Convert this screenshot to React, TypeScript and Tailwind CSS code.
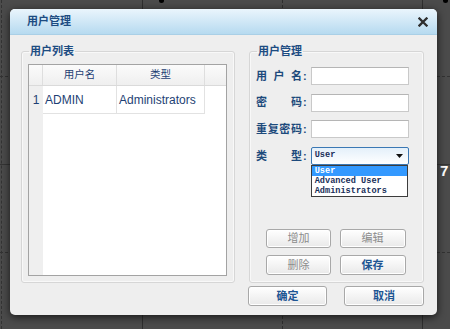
import React from 'react';

const sans = "font-['Liberation_Sans','Noto_Sans_CJK_SC',sans-serif]";
const mono = "font-['Liberation_Mono','Noto_Sans_CJK_SC',monospace]";

const Label: React.FC<{ chars: string[] }> = ({ chars }) => (
  <div className="flex items-center text-[11px] font-bold text-[#1d4a7c]">
    <div className="flex w-[46px] justify-between">
      {chars.map((c, i) => (
        <span key={i}>{c}</span>
      ))}
    </div>
    <span className="ml-[1px]">:</span>
  </div>
);

const Input: React.FC = () => (
  <div className="h-[18px] w-[98px] border border-[#c9c9c9] border-t-[#b5b5b5] bg-white" />
);

const Button: React.FC<{ label: string; active?: boolean; w?: string; h?: string }> = ({
  label,
  active,
  w = 'w-[65px]',
  h = 'h-[19px]',
}) => (
  <button
    className={`${w} ${h} flex items-center justify-center rounded-[3px] border border-[#a8a8a8] bg-gradient-to-b from-white to-[#e9e9e9] text-[11px] shadow-[inset_0_0_0_1px_#ffffff] ${
      active ? 'font-bold text-[#1d5593]' : 'text-[#8c8c8c]'
    }`}
  >
    {label}
  </button>
);

export default function App() {
  return (
    <div className={`relative h-[329px] w-[450px] overflow-hidden bg-[#4b4b4b] ${sans}`}>
      {/* desktop grid behind the window */}
      <div className="absolute left-[1px] top-0 h-full border-l border-dashed border-[#333]" />
      <div className="absolute left-[142px] top-0 h-full border-l border-[#2f2f2f]" />
      <div className="absolute left-[282px] top-0 h-full border-l border-dashed border-[#2f2f2f]" />
      <div className="absolute left-[422px] top-0 h-full border-l border-[#2f2f2f]" />
      <div className="absolute left-0 top-[76px] w-full border-t border-dashed border-[#333]" />
      <div className="absolute left-0 top-[164px] w-full border-t border-[#353535]" />
      <div className="absolute left-0 top-[252px] w-full border-t border-dashed border-[#333]" />
      <div className="absolute left-[159px] top-[-2px] h-[5px] w-[5px] rounded-full bg-black" />
      <div className="absolute left-[443px] top-[-2px] h-[5px] w-[5px] rounded-full bg-black" />
      <div className="absolute left-[440px] top-[163px] text-[15px] font-bold leading-none text-white">7</div>

      {/* dialog window */}
      <div className="absolute left-[10px] top-[9px] flex h-[306px] w-[427px] flex-col overflow-hidden rounded-[5px] bg-[#eeeeee] shadow-[0_2px_8px_rgba(0,0,0,0.7)]">
        <div className="flex h-[26px] items-center justify-between border-b border-[#a9cfe6] bg-gradient-to-b from-[#eaf5fc] to-[#b6daf0] pl-[17px] pr-[9px]">
          <span className="text-[11px] font-bold text-[#1d4c82]">用户管理</span>
          <svg width="10" height="10" viewBox="0 0 10 10">
            <path d="M1.5 1.5 L8.5 8.5 M8.5 1.5 L1.5 8.5" stroke="#2e2e2e" strokeWidth="2.3" strokeLinecap="square" />
          </svg>
        </div>

        <div className="flex flex-1 flex-col pl-[11px] pr-[13px] pt-[9px]">
          <div className="flex gap-[14px]">
            {/* user list */}
            <fieldset className="w-[214px] rounded-[3px] border border-[#d6d6d6] px-[6px] pb-[6px] pr-[7px] pt-[6px] shadow-[inset_0_0_0_1px_#f8f8f8]">
              <legend className="ml-[1px] px-[1px] text-[11px] font-bold leading-[14px] text-[#1d4c82]">用户列表</legend>
              <div className="flex h-[212px] flex-col border border-[#a3a3a3] bg-white">
                <div className="flex h-[21px] border-b border-[#dadada] bg-gradient-to-b from-[#fbfbfb] to-[#efefef] text-[10.5px] text-[#1e3f74]">
                  <div className="w-[14px] border-r border-[#dedede]" />
                  <div className="flex w-[74px] items-center justify-center border-r border-[#dedede]">用户名</div>
                  <div className="flex w-[88px] items-center justify-center border-r border-[#dedede]">类型</div>
                  <div className="flex-1" />
                </div>
                <div className="flex flex-1 text-[12px] text-[#1e3f74]">
                  <div className="w-[14px] bg-[#efefef]">
                    <div className="flex h-[28px] items-center justify-center">1</div>
                  </div>
                  <div className="flex flex-1 items-start">
                    <div className="flex h-[28px] w-[74px] items-center border-b border-r border-[#e2e2e2] pl-[2px]">ADMIN</div>
                    <div className="flex h-[28px] w-[88px] items-center border-b border-r border-[#e2e2e2] pl-[2px]">Administrators</div>
                  </div>
                </div>
              </div>
            </fieldset>

            {/* user management */}
            <fieldset className="w-[175px] rounded-[3px] border border-[#d6d6d6] shadow-[inset_0_0_0_1px_#f8f8f8]">
              <legend className="ml-[7px] px-[1px] text-[11px] font-bold leading-[14px] text-[#1d4c82]">用户管理</legend>
              <div className="flex h-[224px] flex-col pb-[7px] pl-[6px] pt-[9px]">
                <div className="flex flex-col gap-[8.6px]">
                  <div className="flex items-center gap-[4px]">
                    <Label chars={['用', '户', '名']} />
                    <Input />
                  </div>
                  <div className="flex items-center gap-[4px]">
                    <Label chars={['密', '码']} />
                    <Input />
                  </div>
                  <div className="flex items-center gap-[4px]">
                    <Label chars={['重', '复', '密', '码']} />
                    <Input />
                  </div>
                  <div className="flex items-center gap-[3px]">
                    <Label chars={['类', '型']} />
                    <div className="relative ml-[1px]">
                      <div className="flex h-[18px] w-[98px] items-center justify-between rounded-[2px] border border-[#3b78b4] bg-gradient-to-b from-[#e4f0fa] to-white pl-[3px] pr-[5px]">
                        <span className={`${mono} text-[8.6px] font-bold text-[#1a2f5a]`}>User</span>
                        <svg width="7" height="4" viewBox="0 0 7 4">
                          <path d="M0 0 L7 0 L3.5 4 Z" fill="#111" />
                        </svg>
                      </div>
                      <div className={`absolute left-0 top-[18px] z-10 flex w-[97px] flex-col border border-[#3c3c3c] bg-white ${mono} text-[8.6px] font-bold leading-[10px] text-[#1a2f5a]`}>
                        <div className="bg-[#3399ff] pl-[3px] text-white">User</div>
                        <div className="pl-[3px]">Advanced User</div>
                        <div className="pl-[3px]">Administrators</div>
                      </div>
                    </div>
                  </div>
                </div>
                <div className="mt-auto grid w-[144px] grid-cols-2 gap-x-[13px] gap-y-[7px] pl-[10px]">
                  <Button label="增加" />
                  <Button label="编辑" w="w-[66px]" />
                  <Button label="删除" h="h-[20px]" />
                  <Button label="保存" active w="w-[66px]" h="h-[20px]" />
                </div>
              </div>
            </fieldset>
          </div>

          <div className="mt-[3px] flex justify-end gap-[17px]">
            <Button label="确定" active w="w-[79px]" h="h-[20px]" />
            <Button label="取消" active w="w-[80px]" h="h-[20px]" />
          </div>
        </div>
      </div>
    </div>
  );
}
